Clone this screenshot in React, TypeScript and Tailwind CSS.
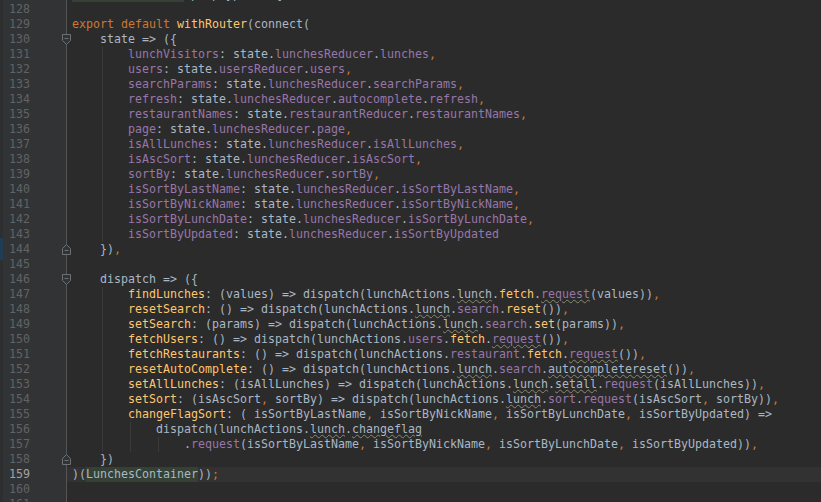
import type { ReactNode } from 'react'

type Tok = [string, string]

// Darcula token colours
const D = 'text-[#A9B7C6]'
const K = 'text-[#CC7832]'
const F = 'text-[#FFC66D]'
const P = 'text-[#9876AA]'
const W = 'text-[#A9B7C6] underline decoration-wavy decoration-1 decoration-[#8A8A70] underline-offset-[1px]'
const PW = 'text-[#9876AA] underline decoration-wavy decoration-1 decoration-[#8A8A70] underline-offset-[1px]'
const HL = 'inline-block h-[15px] bg-[#344134] text-[#A9B7C6]'

type Line = {
  n: number
  indent: number
  toks: Tok[]
  guides?: number[]
  fold?: 'open' | 'close'
  current?: boolean
}

function stateProp(key: string, path: string[], last = false): Tok[] {
  const out: Tok[] = [[P, key], [D, ': state.']]
  path.forEach((p, i) => {
    if (i > 0) out.push([D, '.'])
    out.push([P, p])
  })
  if (!last) out.push([K, ','])
  return out
}

const G1 = [35]

const LINES: Line[] = [
  { n: 127, indent: 0, toks: [[HL, 'LunchesContainer'], [D, '.propTypes = {']] },
  { n: 128, indent: 0, toks: [] },
  {
    n: 129,
    indent: 0,
    toks: [
      [K, 'export default '],
      [F, 'withRouter'],
      [D, '(connect('],
    ],
  },
  { n: 130, indent: 4, toks: [[D, 'state => ({']], fold: 'open' },
  { n: 131, indent: 8, toks: stateProp('lunchVisitors', ['lunchesReducer', 'lunches']), guides: G1 },
  { n: 132, indent: 8, toks: stateProp('users', ['usersReducer', 'users']), guides: G1 },
  { n: 133, indent: 8, toks: stateProp('searchParams', ['lunchesReducer', 'searchParams']), guides: G1 },
  { n: 134, indent: 8, toks: stateProp('refresh', ['lunchesReducer', 'autocomplete', 'refresh']), guides: G1 },
  { n: 135, indent: 8, toks: stateProp('restaurantNames', ['restaurantReducer', 'restaurantNames']), guides: G1 },
  { n: 136, indent: 8, toks: stateProp('page', ['lunchesReducer', 'page']), guides: G1 },
  { n: 137, indent: 8, toks: stateProp('isAllLunches', ['lunchesReducer', 'isAllLunches']), guides: G1 },
  { n: 138, indent: 8, toks: stateProp('isAscSort', ['lunchesReducer', 'isAscSort']), guides: G1 },
  { n: 139, indent: 8, toks: stateProp('sortBy', ['lunchesReducer', 'sortBy']), guides: G1 },
  { n: 140, indent: 8, toks: stateProp('isSortByLastName', ['lunchesReducer', 'isSortByLastName']), guides: G1 },
  { n: 141, indent: 8, toks: stateProp('isSortByNickName', ['lunchesReducer', 'isSortByNickName']), guides: G1 },
  { n: 142, indent: 8, toks: stateProp('isSortByLunchDate', ['lunchesReducer', 'isSortByLunchDate']), guides: G1 },
  { n: 143, indent: 8, toks: stateProp('isSortByUpdated', ['lunchesReducer', 'isSortByUpdated'], true), guides: G1 },
  { n: 144, indent: 4, toks: [[D, '})'], [K, ',']], fold: 'close' },
  { n: 145, indent: 0, toks: [] },
  { n: 146, indent: 4, toks: [[D, 'dispatch => ({']], fold: 'open' },
  {
    n: 147,
    indent: 8,
    guides: G1,
    toks: [
      [F, 'findLunches'],
      [D, ': (values) => dispatch(lunchActions.'],
      [W, 'lunch'],
      [D, '.'],
      [F, 'fetch'],
      [D, '.'],
      [PW, 'request'],
      [D, '(values))'],
      [K, ','],
    ],
  },
  {
    n: 148,
    indent: 8,
    guides: G1,
    toks: [
      [F, 'resetSearch'],
      [D, ': () => dispatch(lunchActions.'],
      [W, 'lunch'],
      [D, '.'],
      [P, 'search'],
      [D, '.'],
      [F, 'reset'],
      [D, '())'],
      [K, ','],
    ],
  },
  {
    n: 149,
    indent: 8,
    guides: G1,
    toks: [
      [F, 'setSearch'],
      [D, ': (params) => dispatch(lunchActions.'],
      [W, 'lunch'],
      [D, '.'],
      [P, 'search'],
      [D, '.'],
      [F, 'set'],
      [D, '(params))'],
      [K, ','],
    ],
  },
  {
    n: 150,
    indent: 8,
    guides: G1,
    toks: [
      [F, 'fetchUsers'],
      [D, ': () => dispatch(lunchActions.'],
      [P, 'users'],
      [D, '.'],
      [F, 'fetch'],
      [D, '.'],
      [PW, 'request'],
      [D, '())'],
      [K, ','],
    ],
  },
  {
    n: 151,
    indent: 8,
    guides: G1,
    toks: [
      [F, 'fetchRestaurants'],
      [D, ': () => dispatch(lunchActions.'],
      [P, 'restaurant'],
      [D, '.'],
      [F, 'fetch'],
      [D, '.'],
      [PW, 'request'],
      [D, '())'],
      [K, ','],
    ],
  },
  {
    n: 152,
    indent: 8,
    guides: G1,
    toks: [
      [F, 'resetAutoComplete'],
      [D, ': () => dispatch(lunchActions.'],
      [W, 'lunch'],
      [D, '.'],
      [P, 'search'],
      [D, '.'],
      [W, 'autocompletereset'],
      [D, '())'],
      [K, ','],
    ],
  },
  {
    n: 153,
    indent: 8,
    guides: G1,
    toks: [
      [F, 'setAllLunches'],
      [D, ': (isAllLunches) => dispatch(lunchActions.'],
      [W, 'lunch'],
      [D, '.'],
      [W, 'setall'],
      [D, '.'],
      [P, 'request'],
      [D, '(isAllLunches))'],
      [K, ','],
    ],
  },
  {
    n: 154,
    indent: 8,
    guides: G1,
    toks: [
      [F, 'setSort'],
      [D, ': (isAscSort'],
      [K, ','],
      [D, ' sortBy) => dispatch(lunchActions.'],
      [W, 'lunch'],
      [D, '.'],
      [P, 'sort'],
      [D, '.'],
      [P, 'request'],
      [D, '(isAscSort'],
      [K, ','],
      [D, ' sortBy))'],
      [K, ','],
    ],
  },
  {
    n: 155,
    indent: 8,
    guides: G1,
    toks: [
      [F, 'changeFlagSort'],
      [D, ': ( isSortByLastName'],
      [K, ','],
      [D, ' isSortByNickName'],
      [K, ','],
      [D, ' isSortByLunchDate'],
      [K, ','],
      [D, ' isSortByUpdated) =>'],
    ],
  },
  {
    n: 156,
    indent: 12,
    guides: [35, 63],
    toks: [
      [D, 'dispatch(lunchActions.'],
      [W, 'lunch'],
      [D, '.'],
      [W, 'changeflag'],
    ],
  },
  {
    n: 157,
    indent: 16,
    guides: [35, 63, 91],
    toks: [
      [D, '.'],
      [P, 'request'],
      [D, '(isSortByLastName'],
      [K, ','],
      [D, ' isSortByNickName'],
      [K, ','],
      [D, ' isSortByLunchDate'],
      [K, ','],
      [D, ' isSortByUpdated))'],
      [K, ','],
    ],
  },
  { n: 158, indent: 4, toks: [[D, '})']], fold: 'close' },
  {
    n: 159,
    indent: 0,
    current: true,
    toks: [
      [D, ')('],
      [HL, 'LunchesContainer'],
      [D, '))'],
      [K, ';'],
    ],
  },
  { n: 160, indent: 0, toks: [] },
  { n: 161, indent: 0, toks: [] },
]

function FoldMarker({ kind }: { kind: 'open' | 'close' }) {
  const outline = kind === 'open' ? 'M0.5 0.5H8.5V6.5L4.5 10.5L0.5 6.5Z' : 'M0.5 10.5H8.5V4.5L4.5 0.5L0.5 4.5Z'
  const minus = kind === 'open' ? 'M2.5 4.5H6.5' : 'M2.5 6.5H6.5'
  return (
    <svg width="9" height="11" viewBox="0 0 9 11" className="absolute left-[62px] top-[2px] z-10" aria-hidden>
      <path d={outline} fill="#313335" stroke="#6E7173" />
      <path d={minus} stroke="#6E7173" />
    </svg>
  )
}

function GutterRow({ line }: { line: Line }) {
  return (
    <div className="relative flex h-[15px]">
      <span className={'w-[30px] text-right ' + (line.current ? 'text-[#A4A3A3]' : 'text-[#606366]')}>{line.n}</span>
      {line.fold && <FoldMarker kind={line.fold} />}
    </div>
  )
}

function CodeRow({ line }: { line: Line }) {
  const parts: ReactNode[] = line.toks.map(([cls, text], i) => (
    <span key={i} className={cls}>
      {text}
    </span>
  ))
  return (
    <div className={'relative h-[15px] whitespace-pre pl-[5px] ' + (line.current ? 'bg-[#323232]' : '')}>
      {line.guides?.map((g) => (
        <span key={g} className="absolute top-0 bottom-0 w-px bg-[#3A3A3A]" style={{ left: g }} />
      ))}
      <span className="relative">
        {' '.repeat(line.indent)}
        {parts}
      </span>
    </div>
  )
}

export default function App() {
  return (
    <div className="h-[502px] w-[821px] overflow-hidden bg-[#2B2B2B] font-['DejaVu_Sans_Mono',monospace] text-[11.63px] leading-[15px] text-[#A9B7C6]">
      <div className="-mt-[13px] flex">
        <div className="relative w-[66px] shrink-0 bg-[#313335]">
          <div className="absolute top-0 bottom-0 left-0 w-[3px] bg-[#2D2E2F]" />
          <div className="absolute left-0 top-[251px] h-[22px] w-[3px] bg-[#1E3D56]" />
          {LINES.map((l) => (
            <GutterRow key={l.n} line={l} />
          ))}
        </div>
        <div className="w-px shrink-0 bg-[#555555]" />
        <div className="min-w-0 flex-1">
          {LINES.map((l) => (
            <CodeRow key={l.n} line={l} />
          ))}
        </div>
      </div>
    </div>
  )
}
